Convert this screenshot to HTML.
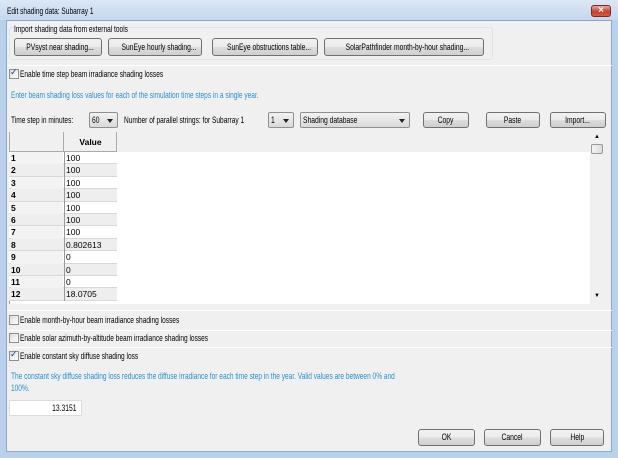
<!DOCTYPE html><html><head><style>
*{box-sizing:border-box;margin:0;padding:0}
body{width:618px;height:458px;overflow:hidden;background:#b9d1ea;font-family:"Liberation Sans",sans-serif;font-size:8.5px;color:#000;position:relative}
.a{position:absolute}
.t{position:absolute;white-space:nowrap;line-height:12px;font-size:9px;transform:scaleX(.73);transform-origin:0 0}
.s{display:inline-block;transform:scaleX(.75);white-space:nowrap}
.btn{position:absolute;border:1px solid #707070;border-radius:3px;background:linear-gradient(#f2f2f2,#ebebeb 50%,#dddddd 51%,#cfcfcf);text-align:center;line-height:16px;font-size:9px;white-space:nowrap;overflow:hidden}
.cb{position:absolute;width:10px;height:10px;border:1px solid #8e8f8f;background:linear-gradient(135deg,#dcdcdc,#fff)}
.blue{color:#2a8fcf}
.sep{position:absolute;left:7px;right:6px;height:1px;background:#d0d0d0;border-bottom:1px solid #fff}
.combo{position:absolute;border:1px solid #8f8f8f;border-radius:2px;background:linear-gradient(#f2f2f2,#dadada);height:16px;line-height:14px;padding-left:2px;font-size:9px;white-space:nowrap}
.combo .s{transform-origin:0 0}
.combo:after{content:"";position:absolute;right:4px;top:6px;border:3px solid transparent;border-top:4px solid #222}
.row{position:absolute;left:0;width:108px;height:12.4px;border-bottom:1px solid #d8d8d8;font-size:8.5px;line-height:12px}
.row b{position:absolute;left:2px;width:52px;height:12.4px}
.row span{position:absolute;left:55px;width:53px;padding-left:1px;border-left:1px solid #999;height:12.4px}
</style></head><body>
<div class="a" style="left:0;top:0;width:618px;height:20px;background:linear-gradient(#dbe7f4,#c4d8ee)"></div>
<div class="t" style="left:7px;top:5px">Edit shading data: Subarray 1</div>
<div class="a" style="left:591px;top:5px;width:20px;height:12px;border:1px solid #7a2a22;border-radius:3px;background:linear-gradient(#e9a99c,#c7412e 55%,#d45a40);color:#fff;font-size:10px;line-height:10px;text-align:center;font-weight:bold">×</div>
<div class="a" style="left:6px;top:20px;width:606px;height:432px;background:#f0f0f0;border:1px solid #8ca8c8"></div>
<div class="a" style="left:9px;top:27px;width:484px;height:33px;border:1px solid #dde3ea;border-radius:3px"></div>
<div class="t" style="left:14px;top:23px">Import shading data from external tools</div>
<div class="btn" style="left:14px;top:38px;width:88px;height:18px"><span class="s">PVsyst near shading...</span></div>
<div class="btn" style="left:108px;top:38px;width:94px;height:18px"><span class="s">SunEye hourly shading...</span></div>
<div class="btn" style="left:212px;top:38px;width:106px;height:18px"><span class="s">SunEye obstructions table...</span></div>
<div class="btn" style="left:324px;top:38px;width:160px;height:18px"><span class="s">SolarPathfinder month-by-hour shading...</span></div>
<div class="sep" style="top:65px"></div>
<div class="cb" style="left:9px;top:69px"></div><div class="a" style="left:10px;top:67px;font-size:9px;color:#1a3a8a">✓</div>
<div class="t" style="left:20px;top:68px">Enable time step beam irradiance shading losses</div>
<div class="t blue" style="left:11px;top:89px">Enter beam shading loss values for each of the simulation time steps in a single year.</div>
<div class="t" style="left:11px;top:114px">Time step in minutes:</div>
<div class="combo" style="left:89px;top:112px;width:29px"><span class="s">60</span></div>
<div class="t" style="left:124px;top:114px">Number of parallel strings: for Subarray 1</div>
<div class="combo" style="left:268px;top:112px;width:26px"><span class="s">1</span></div>
<div class="combo" style="left:300px;top:112px;width:110px"><span class="s">Shading database</span></div>
<div class="btn" style="left:423px;top:112px;width:46px;height:16px;line-height:14px"><span class="s">Copy</span></div>
<div class="btn" style="left:486px;top:112px;width:54px;height:16px;line-height:14px"><span class="s">Paste</span></div>
<div class="btn" style="left:550px;top:112px;width:56px;height:16px;line-height:14px"><span class="s">Import...</span></div>
<div class="a" style="left:9px;top:132px;width:596px;height:172px;background:#fff;border-left:1px solid #999"></div>
<div class="a" style="left:9px;top:132px;width:581px;height:20px;background:#f0f0f0"></div>
<div class="a" style="left:9px;top:132px;width:108px;height:172px">
<div class="a" style="left:0;top:0;width:108px;height:20px;border:1px solid #aaa;border-top:none;background:#f0f0f0"></div>
<div class="a" style="left:54px;top:0;width:1px;height:20px;background:#aaa"></div>
<div class="a" style="left:55px;width:53px;top:4px;text-align:center;font-weight:bold;font-size:8.5px;line-height:12px">Value</div>
<div style="position:absolute;top:20px;left:0">
<div class="row" style="top:0;background:#fff"><b style="background:#f3f3f3">1</b><span>100</span></div>
<div class="row" style="top:12.4px;background:#eee"><b>2</b><span>100</span></div>
<div class="row" style="top:24.8px;background:#fff"><b style="background:#f3f3f3">3</b><span>100</span></div>
<div class="row" style="top:37.2px;background:#eee"><b>4</b><span>100</span></div>
<div class="row" style="top:49.6px;background:#fff"><b style="background:#f3f3f3">5</b><span>100</span></div>
<div class="row" style="top:62px;background:#eee"><b>6</b><span>100</span></div>
<div class="row" style="top:74.4px;background:#fff"><b style="background:#f3f3f3">7</b><span>100</span></div>
<div class="row" style="top:86.8px;background:#eee"><b>8</b><span>0.802613</span></div>
<div class="row" style="top:99.2px;background:#fff"><b style="background:#f3f3f3">9</b><span>0</span></div>
<div class="row" style="top:111.6px;background:#eee"><b>10</b><span>0</span></div>
<div class="row" style="top:124px;background:#fff"><b style="background:#f3f3f3">11</b><span>0</span></div>
<div class="row" style="top:136.4px;background:#eee"><b>12</b><span>18.0705</span></div>
</div></div>
<div class="a" style="left:590px;top:132px;width:15px;height:172px;background:#f0f0f0"></div>
<div class="a" style="left:594px;top:134px;font-size:6px">▲</div>
<div class="a" style="left:591px;top:144px;width:12px;height:10px;border:1px solid #999;border-radius:2px;background:linear-gradient(90deg,#f4f4f4,#dcdcdc)"></div>
<div class="a" style="left:594px;top:293px;font-size:6px">▼</div>
<div class="sep" style="top:310px"></div>
<div class="cb" style="left:9px;top:315px"></div>
<div class="t" style="left:20px;top:314px">Enable month-by-hour beam irradiance shading losses</div>
<div class="sep" style="top:330px"></div>
<div class="cb" style="left:9px;top:333px"></div>
<div class="t" style="left:20px;top:332px">Enable solar azimuth-by-altitude beam irradiance shading losses</div>
<div class="sep" style="top:347px"></div>
<div class="cb" style="left:9px;top:351px"></div><div class="a" style="left:10px;top:349px;font-size:9px;color:#1a3a8a">✓</div>
<div class="t" style="left:20px;top:350px">Enable constant sky diffuse shading loss</div>
<div class="t blue" style="left:11px;top:370px">The constant sky diffuse shading loss reduces the diffuse irradiance for each time step in the year. Valid values are between 0% and</div>
<div class="t blue" style="left:11px;top:382px">100%.</div>
<div class="a" style="left:9px;top:400px;width:73px;height:16px;background:#fff;border:1px solid #dcdcdc;text-align:right;padding-right:4px;line-height:14px;font-size:9px"><span class="s" style="transform-origin:100% 0">13.3151</span></div>
<div class="btn" style="left:418px;top:429px;width:57px;height:17px;line-height:15px"><span class="s">OK</span></div>
<div class="btn" style="left:484px;top:429px;width:57px;height:17px;line-height:15px"><span class="s">Cancel</span></div>
<div class="btn" style="left:550px;top:429px;width:54px;height:17px;line-height:15px"><span class="s">Help</span></div>
</body></html>
